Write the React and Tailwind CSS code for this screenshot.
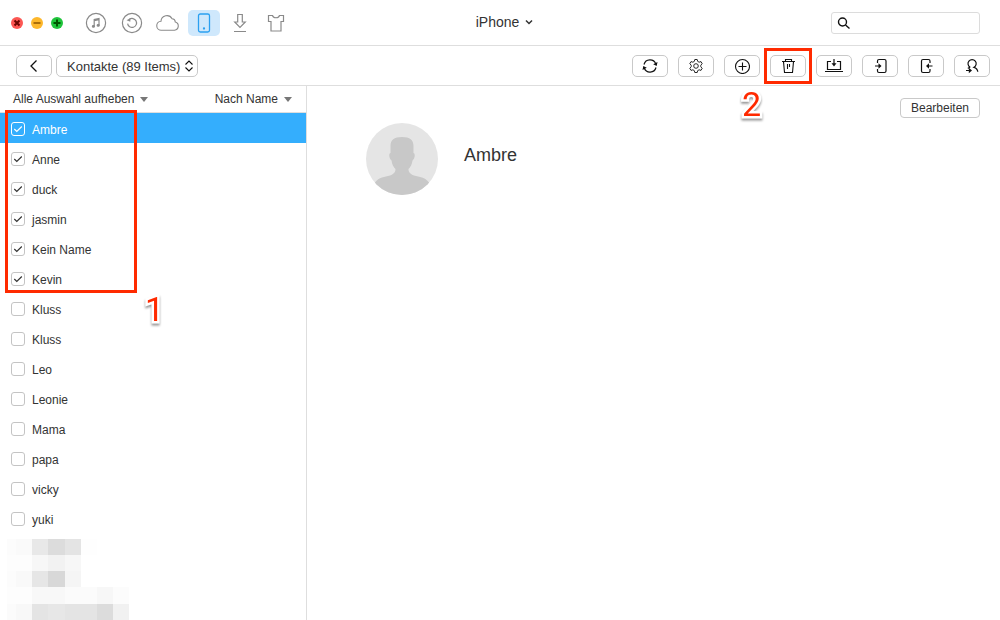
import { useState } from 'react';

const contacts = [
  'Ambre', 'Anne', 'duck', 'jasmin', 'Kein Name', 'Kevin', 'Kluss',
  'Kluss', 'Leo', 'Leonie', 'Mama', 'papa', 'vicky', 'yuki',
];

// hidden contacts, one entry per mosaic block: [x, y, width, height, color]
const mosaic = [
  [0, 0, 9, 16, '#fcfcfc'], [9, 0, 16, 16, '#fafafa'], [25, 0, 16, 16, '#e8e8e8'], [41, 0, 17, 16, '#dcdcdc'], [58, 0, 16, 16, '#e4e4e4'], [74, 0, 16, 16, '#fefefe'],
  [0, 16, 25, 16, '#fdfdfd'], [25, 16, 16, 16, '#f7f7f7'], [41, 16, 17, 16, '#f2f2f2'], [58, 16, 16, 16, '#f7f7f7'],
  [0, 32, 9, 16, '#fcfcfc'], [9, 32, 16, 16, '#f9f9f9'], [25, 32, 16, 16, '#e6e6e6'], [41, 32, 17, 16, '#d8d8d8'], [58, 32, 16, 16, '#f5f5f5'],
  [0, 48, 25, 17, '#fdfdfd'], [25, 48, 33, 17, '#f8f8f8'], [58, 48, 32, 17, '#fbfbfb'], [90, 48, 16, 17, '#f7f7f7'], [106, 48, 16, 17, '#fcfcfc'],
  [0, 65, 9, 16, '#fbfbfb'], [9, 65, 16, 16, '#f8f8f8'], [25, 65, 16, 16, '#e4e4e4'], [41, 65, 17, 16, '#e7e7e7'], [58, 65, 32, 16, '#e4e4e4'], [90, 65, 16, 16, '#dcdcdc'], [106, 65, 16, 16, '#f1f1f1'],
];

function Icon({ children, size = 'size-5', box = '0 0 20 20', width = 1.1 }) {
  return (
    <svg className={`${size} shrink-0`} viewBox={box} fill="none" stroke="currentColor" strokeWidth={width} aria-hidden="true">
      {children}
    </svg>
  );
}

function NavButton({ label, active, children }) {
  return (
    <button
      aria-label={label}
      className={`flex h-[26px] w-8 items-center justify-center rounded-[5px] ${active ? 'bg-[#cfe8fc] text-[#2ba0f0]' : 'text-[#8a8a8a]'}`}
    >
      {children}
    </button>
  );
}

function ToolButton({ label, children }) {
  return (
    <button aria-label={label} className="relative flex h-[22px] w-9 items-center justify-center rounded-[5px] border border-[#c9c9c9] bg-white text-[#111]">
      {children}
    </button>
  );
}

function Step({ children, className }) {
  return (
    <span className={`pointer-events-none absolute font-[Roboto,sans-serif] text-[34px] leading-8 text-[#ff2a00] drop-shadow-[0_2px_1px_rgba(0,0,0,0.4)] [-webkit-text-stroke:5px_#fff] [paint-order:stroke_fill] ${className}`}>
      {children}
    </span>
  );
}

function TitleBar() {
  return (
    <header className="grid h-[46px] grid-cols-[1fr_auto_1fr] items-center border-b border-[#dedede] pr-0.5 pl-[11px]">
      <div className="flex items-center">
        <div className="flex gap-2">
          <button aria-label="Schließen" className="size-3 rounded-full bg-[#fc5753] text-[#6b0500]">
            <Icon size="size-3" box="0 0 12 12" width={2}><path d="M3.5 3.5l5 5M8.5 3.5l-5 5" /></Icon>
          </button>
          <button aria-label="Minimieren" className="size-3 rounded-full bg-[#fdb72b] text-[#8f5600]">
            <Icon size="size-3" box="0 0 12 12" width={1.7}><path d="M2.5 6h7" /></Icon>
          </button>
          <button aria-label="Vergrößern" className="size-3 rounded-full bg-[#1fc43b] text-[#005400]">
            <Icon size="size-3" box="0 0 12 12" width={2}><path d="M2.5 6h7M6 2.5v7" /></Icon>
          </button>
        </div>
        <nav className="ml-[17px] flex gap-1">
          <NavButton label="Musik">
            <Icon size="size-[22px]" box="0 0 22 22" width={1.2}>
              <circle cx="11" cy="11" r="9.6" />
              <path d="M9.2 14.4V7.4l4.8-1v7M9.2 8.6l4.8-1" />
              <ellipse cx="8.4" cy="14.4" rx="1" ry="0.8" fill="currentColor" />
              <ellipse cx="13.2" cy="13.4" rx="1" ry="0.8" fill="currentColor" />
            </Icon>
          </NavButton>
          <NavButton label="Backup">
            <Icon size="size-[22px]" box="0 0 22 22" width={1.2}>
              <circle cx="11" cy="11" r="9.6" />
              <path d="M8.3 7.4A4.5 4.5 0 1 1 6.6 11.6" />
              <path d="M5.6 8.200l3.700 1.600.2-3.800z" fill="currentColor" stroke="none" />
            </Icon>
          </NavButton>
          <NavButton label="iCloud">
            <Icon size="h-[18px] w-6" box="0 0 24 18">
              <path d="M5.500 16.200h13a4.200 4.200 0 0 0 .8-8.200 3.400 3.400 0 0 0-3.200-3.200A5.900 5.900 0 0 0 5 7.200a4.500 4.500 0 0 0 .5 9z" />
            </Icon>
          </NavButton>
          <NavButton label="Gerät" active>
            <Icon width={1.3}>
              <rect x="4.500" y="1" width="11" height="18" rx="1.800" />
              <circle cx="10" cy="15.500" r="0.500" fill="currentColor" />
            </Icon>
          </NavButton>
          <NavButton label="Download">
            <Icon width={1.2}>
              <path d="M7.700 1.500h4.600v7.500h3L10 14.500 4.700 9h3zM4 18.500h12" />
            </Icon>
          </NavButton>
          <NavButton label="Skins">
            <Icon width={1.2}>
              <path d="M6.500 2.500c1 3 6 3 7 0h4v6H15v9.500H5V8.500H2.500v-6z" />
            </Icon>
          </NavButton>
        </nav>
      </div>
      <button className="flex items-center gap-1.5 pb-0.5 text-sm text-[#333]">
        iPhone
        <Icon size="size-2" box="0 0 8 8" width={1.5}><path d="M1 2.500l3 3 3-3" /></Icon>
      </button>
      <label className="mr-[18px] ml-auto flex h-[22px] w-[149px] items-center rounded-[3px] border border-[#dcdcdc] pl-[5px] text-[#111]">
        <Icon size="size-3.5" box="0 0 14 14" width={1.4}>
          <circle cx="5.500" cy="6" r="4" />
          <path d="M8.500 9l4 3.500" />
        </Icon>
        <input type="search" aria-label="Suchen" className="ml-1 min-w-0 flex-1 text-xs outline-none" />
      </label>
    </header>
  );
}

function Toolbar() {
  return (
    <div className="flex h-10 items-center border-b border-[#dedede] pr-2.5 pl-4">
      <button aria-label="Zurück" className="flex h-[22px] w-9 items-center justify-center rounded-[5px] border border-[#c9c9c9] text-[#111]">
        <Icon size="size-3" box="0 0 12 12" width={1.3}><path d="M8.500 .5L3 6l5.500 5.500" /></Icon>
      </button>
      <div className="relative ml-1 flex items-center">
        <select aria-label="Kategorie" className="h-[22px] w-[142px] appearance-none rounded-[5px] border border-[#c9c9c9] bg-white pt-0.5 pl-2.5 text-[13px] leading-[18px] text-[#333]">
          <option>Kontakte (89 Items)</option>
        </select>
        <span className="pointer-events-none absolute right-1 text-[#111]">
          <Icon size="h-3 w-2.5" box="0 0 10 12"><path d="M1.500 4.500L5 1l3.500 3.500M1.500 7.500L5 11l3.500-3.500" /></Icon>
        </span>
      </div>
      <div className="ml-auto flex gap-2.5">
        <ToolButton label="Aktualisieren">
          <Icon size="size-4" box="0 0 16 16" width={1.2}>
            <path d="M2 6.500A6.200 6.200 0 0 1 13.800 6M14 9.500A6.200 6.200 0 0 1 2.200 10" />
            <path d="M15.500 4l-.8 4-3.500-1.800zM.5 12l.8-4 3.500 1.800z" fill="currentColor" stroke="none" />
          </Icon>
        </ToolButton>
        <ToolButton label="Einstellungen">
          <Icon size="size-4" box="0 0 16 16" width={0.9}>
            <path d="M6.800 1.500h2.400l.5 1.900 1.400.8 1.900-.6 1.200 2.100L12.800 7.200v1.600l1.400 1.500-1.200 2.100-1.900-.6-1.400.8-.5 1.900H6.800l-.5-1.900-1.400-.8-1.900.6-1.200-2.100 1.400-1.500V7.200L1.800 5.700 3 3.600l1.900.6 1.400-.8z" />
            <circle cx="8" cy="8" r="2.300" />
          </Icon>
        </ToolButton>
        <ToolButton label="Hinzufügen">
          <Icon size="size-4" box="0 0 16 16">
            <circle cx="8.500" cy="8.500" r="7" />
            <path d="M8.500 4.500v8M4.500 8.500h8" />
          </Icon>
        </ToolButton>
        <ToolButton label="Löschen">
          <Icon size="size-4" box="0 0 16 16">
            <path d="M2 3.500h13M5.500 3.500v-2h6v2M3.500 3.500l1 11h8l1-11M7.500 6v5M9.500 6v3" />
          </Icon>
          <span className="pointer-events-none absolute -inset-x-[7px] -inset-y-2 border-3 border-[#ff2a00]" />
          <Step className="top-8 -left-[29px]">2</Step>
        </ToolButton>
        <ToolButton label="Auf Computer exportieren">
          <Icon size="h-3.5 w-[18px]" box="0 0 18 14" width={1.2}>
            <path d="M6 2.500H2.500v8h13v-8H12M0 12.500h18M9 0v6" />
            <path d="M6.500 4.300h5L9 7.500z" fill="currentColor" stroke="none" />
          </Icon>
        </ToolButton>
        <ToolButton label="Auf Gerät importieren">
          <Icon size="size-4" box="0 0 16 16" width={1.2}>
            <path d="M5.500 5V3q0-1.500 1.500-1.500h5.500q1.500 0 1.500 1.500v10q0 1.500-1.500 1.500H7q-1.500 0-1.500-1.500v-2M3 8h5" />
            <path d="M6.500 5.300v5.400L9.500 8z" fill="currentColor" stroke="none" />
          </Icon>
        </ToolButton>
        <ToolButton label="Vom Gerät exportieren">
          <Icon size="size-4" box="0 0 16 16" width={1.2}>
            <path d="M12 5V3q0-1.500-1.500-1.500H5Q3.500 1.500 3.500 3v10q0 1.500 1.500 1.500h5.500q1.500 0 1.500-1.500v-2M10 8h4.500" />
            <path d="M11 5.300v5.400L8 8z" fill="currentColor" stroke="none" />
          </Icon>
        </ToolButton>
        <ToolButton label="Kontakte übertragen">
          <Icon size="size-4" box="0 0 16 16" width={1.2}>
            <path d="M6.200 9.300a4.100 4.100 0 1 1 3.800 0c2.200.6 3.500 2 3.800 4.500M6.200 9.300c-1 .2-1.800.5-2.400 1.100M2 12.500h4" />
            <path d="M4.800 9.800v5.400L8 12.500z" fill="currentColor" stroke="none" />
          </Icon>
        </ToolButton>
      </div>
    </div>
  );
}

function ContactRow({ name, checked, active, onToggle }) {
  return (
    <li className={active ? 'bg-[#34aefd] text-white' : 'text-[#333]'}>
      <label className="flex h-[30px] items-center gap-[7px] pt-0.5 pl-[11px] text-xs">
        <span className="grid size-3.5">
          <input
            type="checkbox"
            checked={checked}
            onChange={onToggle}
            className={`col-start-1 row-start-1 size-3.5 appearance-none rounded-[3px] border ${active ? 'border-white' : 'border-[#c4c4c4] bg-white'}`}
          />
          {checked && (
            <svg className="pointer-events-none col-start-1 row-start-1 size-3.5" viewBox="0 0 14 14" fill="none" stroke="currentColor" strokeWidth="1.2" aria-hidden="true">
              <path d="M3.300 7l2.500 2.500 5-5" />
            </svg>
          )}
        </span>
        <span className="pt-0.5">{name}</span>
      </label>
    </li>
  );
}

function Caret() {
  return <svg className="h-[5px] w-2" viewBox="0 0 8 5" fill="#777" aria-hidden="true"><path d="M0 0h8L4 5z" /></svg>;
}

function Sidebar() {
  const [selected, setSelected] = useState([0, 1, 2, 3, 4, 5]);
  const toggle = (i) => setSelected(selected.includes(i) ? selected.filter((s) => s !== i) : [...selected, i]);

  return (
    <aside className="relative w-[307px] shrink-0 overflow-hidden border-r border-[#dedede]">
      <div className="flex h-[27px] items-center justify-between border-b border-[#dedede] pr-3.5 pl-[13px] text-xs text-[#333]">
        <button className="flex items-center gap-1.5">Alle Auswahl aufheben <Caret /></button>
        <button className="flex items-center gap-1.5">Nach Name <Caret /></button>
      </div>
      <ul>
        {contacts.map((name, i) => (
          <ContactRow key={i} name={name} active={i === 0} checked={selected.includes(i)} onToggle={() => toggle(i)} />
        ))}
      </ul>
      <svg className="mt-1.5 ml-[7px] h-[81px] w-[122px]" viewBox="0 0 122 81" shapeRendering="crispEdges" aria-hidden="true">
        {mosaic.map(([x, y, w, h, fill]) => (
          <rect key={`${x}-${y}`} x={x} y={y} width={w} height={h} fill={fill} />
        ))}
      </svg>
      <span className="pointer-events-none absolute top-6 left-[5px] h-[183px] w-[132px] border-3 border-[#ff2a00]" />
      <Step className="top-[207px] left-[145px]">1</Step>
    </aside>
  );
}

function Detail() {
  return (
    <main className="flex flex-1 items-start pt-3 pr-5 pl-[59px]">
      <svg className="mt-[25px] size-[72px]" viewBox="0 0 72 72" aria-hidden="true">
        <clipPath id="avatar"><circle cx="36" cy="36" r="36" /></clipPath>
        <g clipPath="url(#avatar)">
          <rect width="72" height="72" fill="#e5e5e5" />
          <path
            d="M36 14c-8 0-11.500 3-11.500 9v7c-2 0-1.500 6 1 7.500.5 4 2 6.500 4 8.500 0 3-1.500 5-5.500 6.500-5.500 1.500-11 1.500-15 7v13h54V59.500c-4-5.500-9.500-5.500-15-7-4-1.500-5.500-3.500-5.500-6.500 2-2 3.500-4.500 4-8.500 2.500-1.500 3-7.500 1-7.500v-7c0-6-3.500-9-11.500-9z"
            fill="#c8c8c8"
          />
        </g>
      </svg>
      <h1 className="mt-11 ml-[26px] text-lg leading-[26px] text-[#333]">Ambre</h1>
      <button className="ml-auto h-5 rounded-[4px] border border-[#c9c9c9] px-2.5 text-xs text-[#333]">Bearbeiten</button>
    </main>
  );
}

export default function App() {
  return (
    <div className="flex h-screen flex-col overflow-hidden rounded-md bg-white font-['Liberation_Sans',Arial,sans-serif]">
      <TitleBar />
      <Toolbar />
      <div className="flex min-h-0 flex-1">
        <Sidebar />
        <Detail />
      </div>
    </div>
  );
}
